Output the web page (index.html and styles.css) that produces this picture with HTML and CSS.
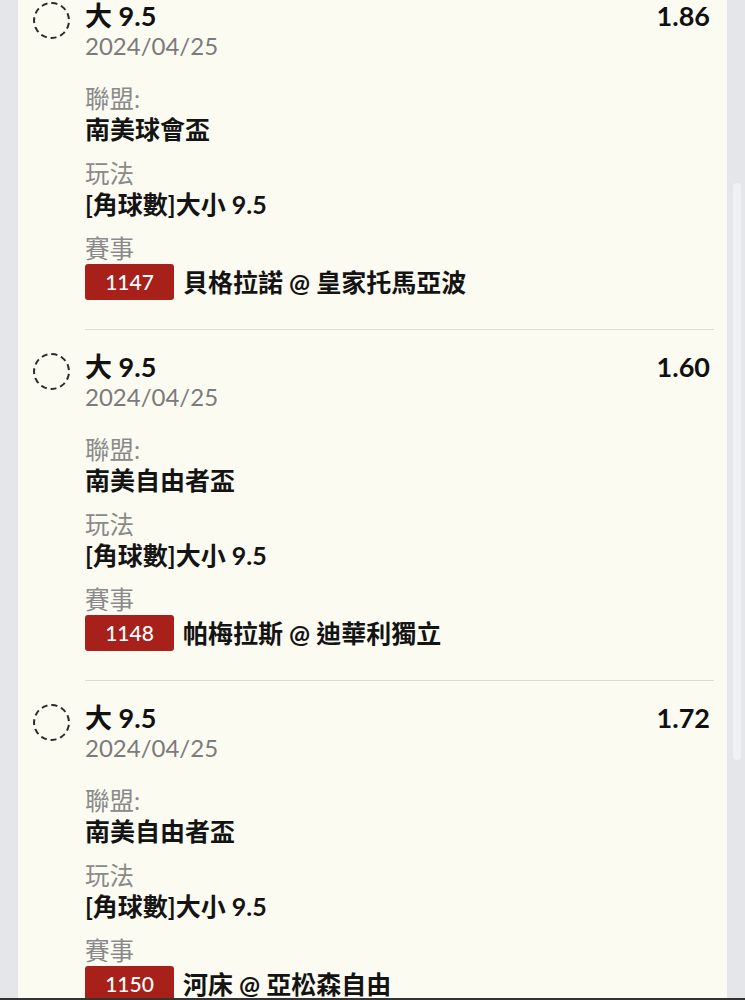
FILE: index.html
```html
<!DOCTYPE html>
<html lang="zh-Hant">
<head>
<meta charset="utf-8">
<title>Bets</title>
<link rel="stylesheet" href="styles.css">
</head>
<body>
<div class="page">
  <div class="card">
    <div class="item">
      <div class="check"></div>
      <div class="body">
        <div class="head">
          <div class="title">大 9.5</div>
          <div class="odds">1.86</div>
        </div>
        <div class="date">2024/04/25</div>
        <div class="field first">
          <div class="label">聯盟:</div>
          <div class="value">南美球會盃</div>
        </div>
        <div class="field">
          <div class="label">玩法</div>
          <div class="value">[角球數]大小 9.5</div>
        </div>
        <div class="field">
          <div class="label">賽事</div>
          <div class="match"><span class="badge">1147</span><span class="value">貝格拉諾 @ 皇家托馬亞波</span></div>
        </div>
      </div>
    </div>
    <div class="item">
      <div class="check"></div>
      <div class="body">
        <div class="head">
          <div class="title">大 9.5</div>
          <div class="odds">1.60</div>
        </div>
        <div class="date">2024/04/25</div>
        <div class="field first">
          <div class="label">聯盟:</div>
          <div class="value">南美自由者盃</div>
        </div>
        <div class="field">
          <div class="label">玩法</div>
          <div class="value">[角球數]大小 9.5</div>
        </div>
        <div class="field">
          <div class="label">賽事</div>
          <div class="match"><span class="badge">1148</span><span class="value">帕梅拉斯 @ 迪華利獨立</span></div>
        </div>
      </div>
    </div>
    <div class="item">
      <div class="check"></div>
      <div class="body">
        <div class="head">
          <div class="title">大 9.5</div>
          <div class="odds">1.72</div>
        </div>
        <div class="date">2024/04/25</div>
        <div class="field first">
          <div class="label">聯盟:</div>
          <div class="value">南美自由者盃</div>
        </div>
        <div class="field">
          <div class="label">玩法</div>
          <div class="value">[角球數]大小 9.5</div>
        </div>
        <div class="field">
          <div class="label">賽事</div>
          <div class="match"><span class="badge">1150</span><span class="value">河床 @ 亞松森自由</span></div>
        </div>
      </div>
    </div>
  </div>
  <div class="scrollbar"></div>
  <div class="bottombar"></div>
</div>
</body>
</html>
```
FILE: styles.css
```css
html, body {
  margin: 0;
  padding: 0;
  height: 100%;
  overflow: hidden;
  background: #e5e6ea;
}
body {
  font-family: Lato, "Noto Sans CJK TC", sans-serif;
  color: #141414;
}
.page {
  position: relative;
  height: 1000px;
  overflow: hidden;
}
.card {
  margin: -21px 18px 0 18px;
  background: #fcfbf2;
  padding: 0 13px 0 15px;
}
.item {
  display: flex;
  align-items: flex-start;
}
.check {
  flex: none;
  width: 33px;
  height: 33px;
  margin-top: 23px;
  margin-right: 15px;
  border: 2px dashed #2a2a2a;
  border-radius: 50%;
}
.body {
  flex: 1;
  padding: 22px 0 29px 0;
  border-bottom: 1px solid #dddcd3;
}
.head {
  display: flex;
  justify-content: space-between;
  align-items: center;
  height: 30px;
}
.title, .odds {
  font-size: 27px;
  font-weight: 700;
  line-height: 30px;
  color: #111;
}
.odds {
  padding-right: 4px;
}
.date {
  font-size: 24px;
  line-height: 30px;
  color: #7b7b7b;
}
.field {
  margin-top: 14px;
}
.field.first {
  margin-top: 23px;
}
.label {
  font-size: 24.5px;
  line-height: 30px;
  color: #8a8a8a;
}
.value {
  font-size: 25px;
  line-height: 31px;
  font-weight: 700;
  color: #141414;
}
.match {
  display: flex;
  align-items: center;
  gap: 9px;
  height: 36px;
}
.badge {
  flex: none;
  width: 89px;
  height: 36px;
  line-height: 36px;
  text-align: center;
  background: #a8201a;
  color: #fff;
  font-size: 21px;
  font-weight: 500;
  border-radius: 3px;
}
.scrollbar {
  position: absolute;
  left: 733px;
  top: 183px;
  width: 8px;
  height: 577px;
  border-radius: 4px;
  background: #f0f1f4;
}
.bottombar {
  position: absolute;
  left: 0;
  right: 0;
  bottom: 0;
  height: 2px;
  background: #333;
}
```
